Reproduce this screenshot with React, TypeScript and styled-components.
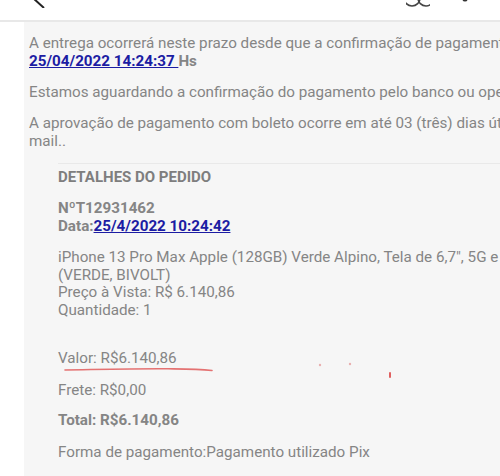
import React from 'react'
import styled, { createGlobalStyle } from 'styled-components'

const GlobalStyle = createGlobalStyle`
  html, body {
    margin: 0;
    padding: 0;
    background: #ffffff;
    overflow: hidden;
  }
  body {
    font-family: Roboto, 'Liberation Sans', Arial, sans-serif;
  }
`

const Page = styled.div`
  width: 500px;
  height: 476px;
  display: flex;
  flex-direction: column;
  overflow: hidden;
`

const TopBar = styled.header`
  height: 20px;
  flex-shrink: 0;
  background: #ffffff;
  border-bottom: 2px solid #e8e8e8;
  display: flex;
  align-items: flex-end;
  overflow: hidden;
  padding: 0 30px 0 30px;
`

const BarIcon = styled.svg<{ $ml?: number; $mb?: number }>`
  flex-shrink: 0;
  margin-left: ${(p) => p.$ml ?? 0}px;
  margin-bottom: ${(p) => p.$mb ?? 8}px;
`

const Spacer = styled.div`
  flex: 1;
`

const Body = styled.div`
  flex: 1;
  display: flex;
  min-height: 0;
`

const Gutter = styled.div`
  width: 24px;
  flex-shrink: 0;
  background: #ffffff;
`

const Content = styled.main`
  flex: 1;
  background: #f6f6f6;
  padding: 12px 0 0 5px;
  min-width: 0;
  overflow: hidden;
  color: #858585;
  font-size: 15.2px;
`

const Para = styled.p`
  margin: 0 0 13px;
  line-height: 18px;
  white-space: nowrap;
`

const DateLink = styled.a`
  color: #1c1ca3;
  font-weight: 700;
  text-decoration: underline;
`

const Suffix = styled.span`
  font-weight: 700;
`

const Details = styled.section`
  margin: 9px 0 0 29px;
  border-top: 1px solid #e9e9e9;
  padding-top: 4px;
`

const Heading = styled.h2`
  margin: 0 0 14px;
  font-size: 15px;
  line-height: 18px;
  font-weight: 700;
  color: #7e7e7e;
`

const Block = styled.div<{ $gap?: number; $bold?: boolean }>`
  margin-bottom: ${(p) => p.$gap ?? 14}px;
  line-height: 17.5px;
  white-space: nowrap;
  font-weight: ${(p) => (p.$bold ? 700 : 400)};
`

const Strong = styled.span`
  font-weight: 700;
`

const Marked = styled.div`
  position: relative;
`

const Scribble = styled.svg`
  position: absolute;
  left: 0;
  top: 10px;
  pointer-events: none;
`

export default function App() {
  return (
    <>
      <GlobalStyle />
      <Page>
        <TopBar>
          <BarIcon width="20" height="24" viewBox="0 0 20 24" $mb={12}>
            <path d="M14 4 L3 14 L14 24" fill="none" stroke="#222" strokeWidth="2" />
          </BarIcon>
          <Spacer />
          <BarIcon width="24" height="24" viewBox="0 0 24 24">
            <circle cx="6" cy="10" r="8" fill="none" stroke="#444" strokeWidth="1.6" />
            <circle cx="20" cy="10" r="8" fill="none" stroke="#444" strokeWidth="1.6" />
          </BarIcon>
          <BarIcon width="10" height="24" viewBox="0 0 10 24" $ml={30}>
            <circle cx="5" cy="11" r="2.6" fill="#333" />
          </BarIcon>
        </TopBar>
        <Body>
          <Gutter />
          <Content>
            <Para>
              A entrega ocorrerá neste prazo desde que a confirmação de pagamento ocorra até
              <br />
              <DateLink href="#">25/04/2022 14:24:37 </DateLink>
              <Suffix>Hs</Suffix>
            </Para>
            <Para>Estamos aguardando a confirmação do pagamento pelo banco ou operadora.</Para>
            <Para>
              A aprovação de pagamento com boleto ocorre em até 03 (três) dias úteis, você receberá um e-
              <br />
              mail..
            </Para>
            <Details>
              <Heading>DETALHES DO PEDIDO</Heading>
              <Block>
                <Strong>NºT12931462</Strong>
                <br />
                <Strong>Data:</Strong>
                <DateLink href="#">25/4/2022 10:24:42</DateLink>
              </Block>
              <Block $gap={31}>
                iPhone 13 Pro Max Apple (128GB) Verde Alpino, Tela de 6,7", 5G e Câmera Tripla
                <br />
                (VERDE, BIVOLT)
                <br />
                Preço à Vista: R$ 6.140,86
                <br />
                Quantidade: 1
              </Block>
              <Marked>
                <Block>Valor: R$6.140,86</Block>
                <Scribble width="360" height="30" viewBox="0 0 360 30">
                  <path
                    d="M7 10 C40 9.5 80 8.5 110 8.8 S140 9 154 10.5"
                    fill="none"
                    stroke="#e05a5a"
                    strokeWidth="1.6"
                    strokeLinecap="round"
                    opacity="0.85"
                  />
                  <circle cx="262" cy="5" r="1.2" fill="#e9b0b0" />
                  <circle cx="292" cy="4" r="1.2" fill="#e9b0b0" />
                  <rect x="331" y="12" width="2" height="6" rx="1" fill="#e06060" />
                </Scribble>
              </Marked>
              <Block $gap={13}>Frete: R$0,00</Block>
              <Block $bold>Total: R$6.140,86</Block>
              <Block>Forma de pagamento:Pagamento utilizado Pix</Block>
            </Details>
          </Content>
        </Body>
      </Page>
    </>
  )
}
